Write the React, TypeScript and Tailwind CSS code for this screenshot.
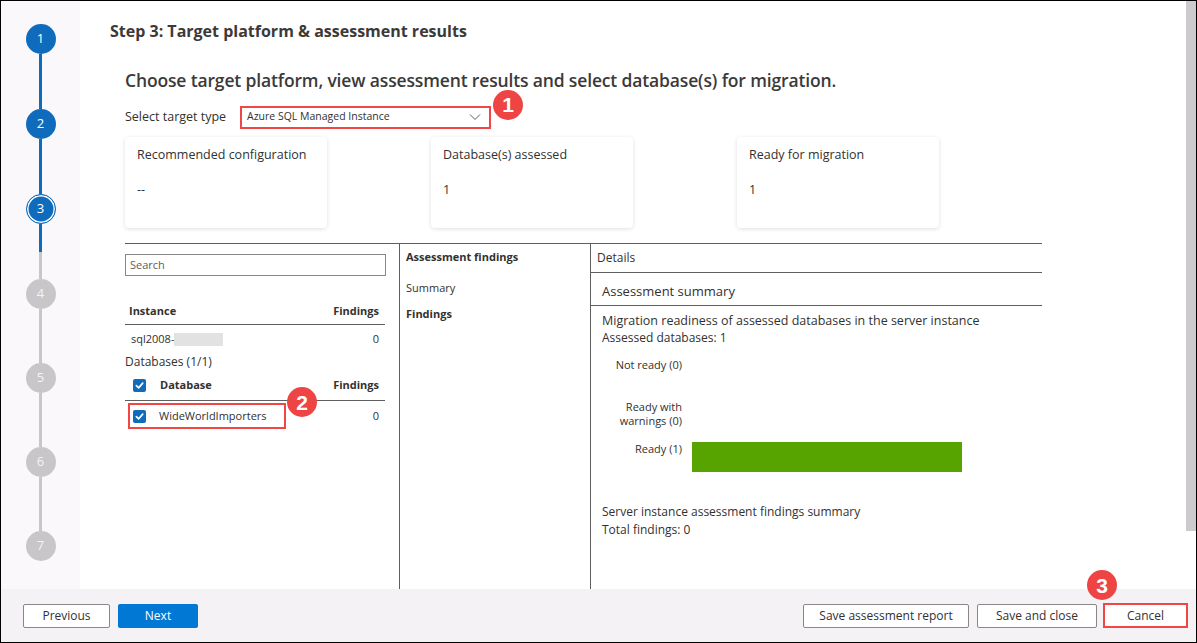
import React from 'react';

const FONT = { fontFamily: '"Open Sans", "Noto Sans", sans-serif' };

const Badge = ({ n, className }: { n: number; className: string }) => (
  <div
    className={`absolute w-[30px] h-[30px] rounded-full bg-[#ef4444] text-white flex items-center justify-center text-[21px] font-bold leading-none ${className}`}
    style={{ fontFamily: '"Liberation Sans", Arial, sans-serif' }}
  >
    {n}
  </div>
);

const Check = () => (
  <div className="w-[13px] h-[13px] rounded-[2px] bg-[#0f6cbd] flex items-center justify-center">
    <svg width="9" height="9" viewBox="0 0 10 10" fill="none">
      <path d="M1.5 5.2 L4 7.6 L8.6 2.4" stroke="white" strokeWidth="1.8" strokeLinecap="round" strokeLinejoin="round" />
    </svg>
  </div>
);

const StepRail = () => {
  const steps = [1, 2, 3, 4, 5, 6, 7];
  return (
    <div className="w-[79px] bg-[#fbf8fb] flex flex-col items-center pt-[23px]">
      {steps.map((n, i) => (
        <React.Fragment key={n}>
          {i > 0 && i < 3 && <div className="w-[3px] h-[55px] bg-[#0f6cbd]" />}
          {i === 3 && (
            <div className="w-[3px] h-[55px] flex flex-col">
              <div className="h-[28px] bg-[#0f6cbd]" />
              <div className="flex-1 bg-[#c8c6c9]" />
            </div>
          )}
          {i > 3 && <div className="w-[3px] h-[54px] bg-[#c8c6c9]" />}
          {n < 3 && (
            <div className="w-[30px] h-[30px] rounded-full bg-[#0f6cbd] text-white text-[13px] flex items-center justify-center">{n}</div>
          )}
          {n === 3 && (
            <div className="w-[30px] h-[30px] rounded-full bg-[#0f6cbd] border-[1.5px] border-[#0f6cbd] shadow-[inset_0_0_0_1.5px_white] text-white text-[13px] flex items-center justify-center">3</div>
          )}
          {n > 3 && (
            <div className="w-[30px] h-[30px] rounded-full bg-[#c8c6c9] text-[#f4f4f4] text-[13px] flex items-center justify-center">{n}</div>
          )}
        </React.Fragment>
      ))}
    </div>
  );
};

const StatCard = ({ label, value }: { label: string; value: string }) => (
  <div className="w-[202px] h-[91px] rounded-[4px] bg-white shadow-[0_1px_4px_rgba(0,0,0,0.13)] px-[12px] pt-[9px] text-[12.5px] text-[#323130]">
    <div className="leading-[18px]">{label}</div>
    <div className="leading-[18px] mt-[17px]">{value}</div>
  </div>
);

const ChartRow = ({ label, width }: { label: React.ReactNode; width: number }) => (
  <div className="flex h-[30px] items-start">
    <div className="w-[80px] text-right text-[11px] leading-[14px] text-[#323130]">{label}</div>
    <div className="ml-[10px] h-[30px] bg-[#57a300]" style={{ width }} />
  </div>
);

export default function App() {
  return (
    <div className="w-[1197px] h-[643px] border border-black flex flex-col bg-white text-[#323130] overflow-hidden" style={FONT}>
      <div className="flex h-[588px]">
        <StepRail />
        <div className="flex-1 flex flex-col">
          <div className="ml-[30px] mt-[19px] text-[16px] font-bold leading-[22px] text-[#3b3a39]">
            Step 3: Target platform &amp; assessment results
          </div>
          <div className="ml-[45px] w-[917px] flex-1 flex flex-col">
            <div className="mt-[25px] text-[17.5px] font-semibold leading-[26px] text-[#3b3a39] tracking-[-0.15px]">
              Choose target platform, view assessment results and select database(s) for migration.
            </div>
            <div className="flex items-center mt-[13px] h-[22px]">
              <div className="text-[12.5px] w-[115px]">Select target type</div>
              <div className="relative w-[251px] h-[23px] border-2 border-[#f04646] flex items-center pl-[5px] pr-[8px]">
                <span className="text-[10.5px] flex-1">Azure SQL Managed Instance</span>
                <svg width="12" height="8" viewBox="0 0 12 8" fill="none">
                  <path d="M1 1.5 L6 6.5 L11 1.5" stroke="#605e5c" strokeWidth="1" />
                </svg>
                <Badge n={1} className="left-[251px] top-[-18px]" />
              </div>
            </div>
            <div className="flex gap-[104px] mt-[9px]">
              <StatCard label="Recommended configuration" value="--" />
              <StatCard label="Database(s) assessed" value="1" />
              <StatCard label="Ready for migration" value="1" />
            </div>
            <div className="mt-[15px] flex-1 flex border-t border-[#5f5f5f]">
              <div className="w-[275px] border-r border-[#5f5f5f] pr-[13px]">
                <div className="mt-[10px] h-[22px] border border-[#8a8886] flex items-center pl-[4px] text-[11px] text-[#605e5c]">Search</div>
                <div className="mt-[22px] h-[27px] flex items-center justify-between pl-[4px] pr-[6px] border-b border-[#5f5f5f] text-[11px] font-bold w-[260px]">
                  <span>Instance</span>
                  <span>Findings</span>
                </div>
                <div className="h-[28px] flex items-center justify-between w-[260px] pl-[6px] pr-[6px] text-[11px]">
                  <span className="flex items-center">sql2008-<span className="inline-block w-[49px] h-[13px] bg-[#e3e2e2]" /></span>
                  <span>0</span>
                </div>
                <div className="text-[12px] leading-[16px] mt-[1px]">Databases (1/1)</div>
                <div className="h-[31px] flex items-center justify-between w-[260px] pl-[8px] pr-[6px] border-b border-[#5f5f5f] text-[11px] font-bold">
                  <span className="flex items-center gap-[14px]"><Check /> Database</span>
                  <span>Findings</span>
                </div>
                <div className="h-[30px] flex items-center justify-between w-[260px] pl-[3px] pr-[6px] text-[11px]">
                  <div className="relative h-[26px] w-[158px] border-2 border-[#f04646] flex items-center gap-[13px] pl-[3px]">
                    <Check />
                    <span>WideWorldImporters</span>
                    <Badge n={2} className="left-[157px] top-[-18px]" />
                  </div>
                  <span>0</span>
                </div>
              </div>
              <div className="w-[191px] border-r border-[#5f5f5f] pl-[6px] pt-[5px] text-[11px]">
                <div className="font-bold leading-[16px]">Assessment findings</div>
                <div className="leading-[16px] mt-[15px]">Summary</div>
                <div className="font-bold leading-[16px] mt-[10px]">Findings</div>
              </div>
              <div className="flex-1 flex flex-col">
                <div className="h-[29px] border-b border-[#5f5f5f] flex items-center pl-[6px] text-[12px]">Details</div>
                <div className="h-[33px] border-b border-[#5f5f5f] flex items-center pl-[11px] pt-[6px] text-[13px]">Assessment summary</div>
                <div className="pl-[11px] pt-[6px] text-[12px]">
                  <div className="leading-[17px] text-[12.5px]">Migration readiness of assessed databases in the server instance</div>
                  <div className="leading-[17px]">Assessed databases: 1</div>
                  <div className="mt-[12px] flex flex-col gap-[12px]">
                    <ChartRow label="Not ready (0)" width={0} />
                    <ChartRow label={<>Ready with<br />warnings (0)</>} width={0} />
                    <ChartRow label="Ready (1)" width={270} />
                  </div>
                  <div className="mt-[31px] leading-[18px]">Server instance assessment findings summary</div>
                  <div className="leading-[18px]">Total findings: 0</div>
                </div>
              </div>
            </div>
          </div>
        </div>
        <div className="w-[10px] flex flex-col">
          <div className="h-[530px] bg-[#cdcbce]" />
        </div>
      </div>
      <div className="flex-1 bg-[#f5f2f5] flex items-center pl-[22px] pr-[8px] text-[12px]">
        <button className="w-[87px] h-[24px] bg-white border border-[#8a8886] rounded-[2px]">Previous</button>
        <button className="ml-[8px] w-[80px] h-[24px] bg-[#0078d4] text-white rounded-[2px]">Next</button>
        <div className="flex-1" />
        <button className="w-[166px] h-[24px] bg-white border border-[#8a8886] rounded-[2px]">Save assessment report</button>
        <button className="ml-[8px] w-[120px] h-[24px] bg-white border border-[#8a8886] rounded-[2px]">Save and close</button>
        <div className="relative ml-[6px]">
          <button className="w-[85px] h-[25px] bg-white border-2 border-[#f04646]">Cancel</button>
          <Badge n={3} className="left-[-16px] top-[-33px]" />
        </div>
      </div>
    </div>
  );
}
